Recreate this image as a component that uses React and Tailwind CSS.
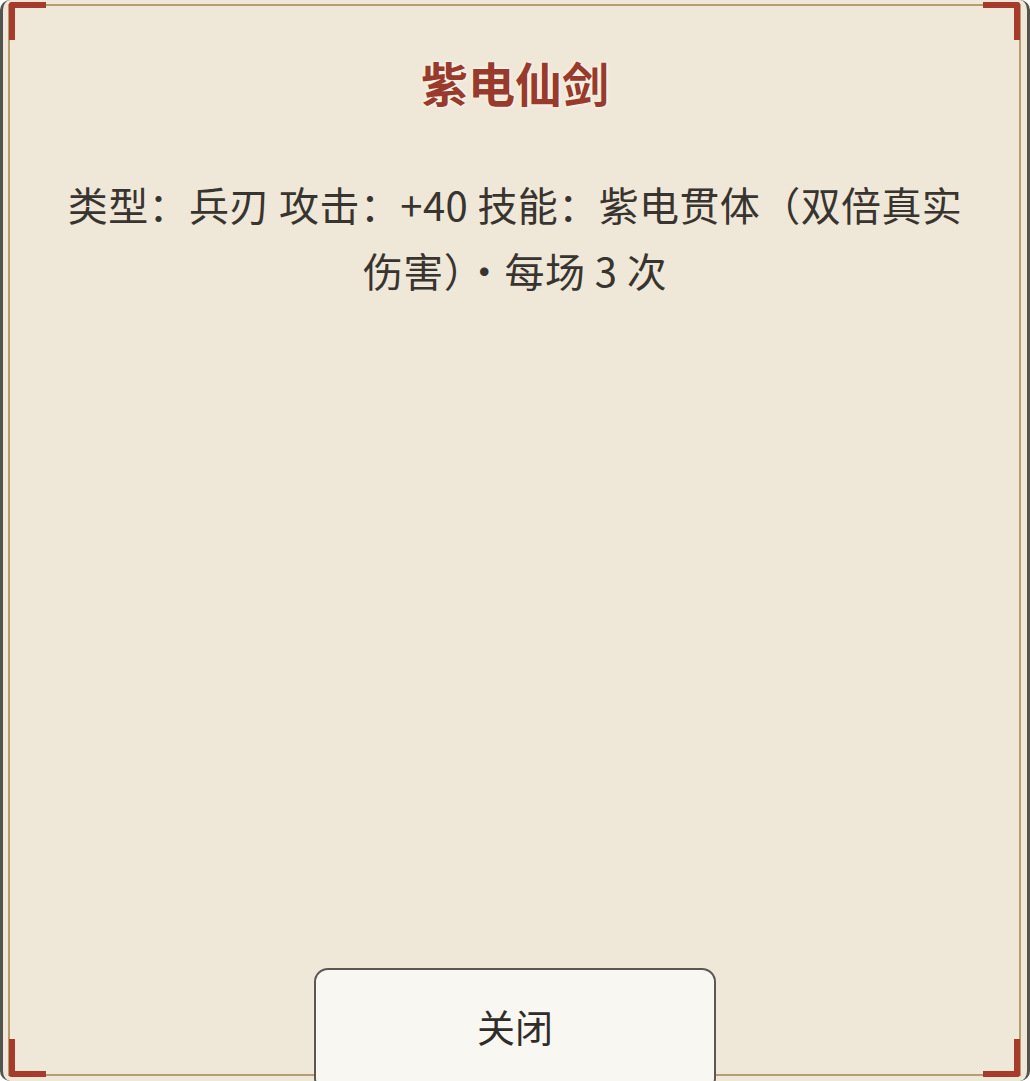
const cjk = { fontFamily: '"Noto Sans CJK SC", "Noto Sans", sans-serif' }

function Corner({ pos }) {
  const base = 'absolute w-[37px] h-[38px] border-[#a63b2b] pointer-events-none'
  const map = {
    tl: 'top-[2px] left-[6px] border-t-[6px] border-l-[6px] rounded-tl-[3px]',
    tr: 'top-[2px] right-[7px] border-t-[6px] border-r-[6px] rounded-tr-[3px]',
    bl: 'bottom-[4px] left-[6px] border-b-[6px] border-l-[6px] rounded-bl-[3px]',
    br: 'bottom-[4px] right-[7px] border-b-[6px] border-r-[6px] rounded-br-[3px]',
  }
  return <div className={`${base} ${map[pos]}`} />
}

export default function App() {
  return (
    <div
      className="relative w-[1030px] h-[1081px] overflow-hidden bg-[#efe7d7] border-x-[3px] border-[#55534d] rounded-[10px]"
      style={cjk}
    >
      {/* frame line */}
      <div className="absolute top-[4px] left-[5px] right-[6px] bottom-[5px] border-2 border-[#b59d6f] pointer-events-none" />

      <div className="relative z-10 flex flex-col items-center h-full">
        <h1 className="mt-[47px] text-[47px] leading-[69px] font-bold text-[#983a2c] [text-shadow:0_0_4px_#fffaf0,0_0_2px_#fffaf0]">
          紫电仙剑
        </h1>

        <p className="mt-[55px] w-[912px] text-center text-[40px] leading-[66px] tracking-[0.4px] text-[#38342f]">
          类型：兵刃 攻击：+40 技能：紫电贯体（双倍真实伤害）·每场 3 次
        </p>

        <div className="flex-1" />

        <button className="w-[402px] h-[124px] -mb-[11px] shrink-0 rounded-[14px] border-2 border-[#5b5853] bg-[#f9f7f1] text-[38px] text-[#2f2c29] flex items-start justify-center pt-[27px]">
          关闭
        </button>
      </div>

      <Corner pos="tl" />
      <Corner pos="tr" />
      <Corner pos="bl" />
      <Corner pos="br" />
    </div>
  )
}
